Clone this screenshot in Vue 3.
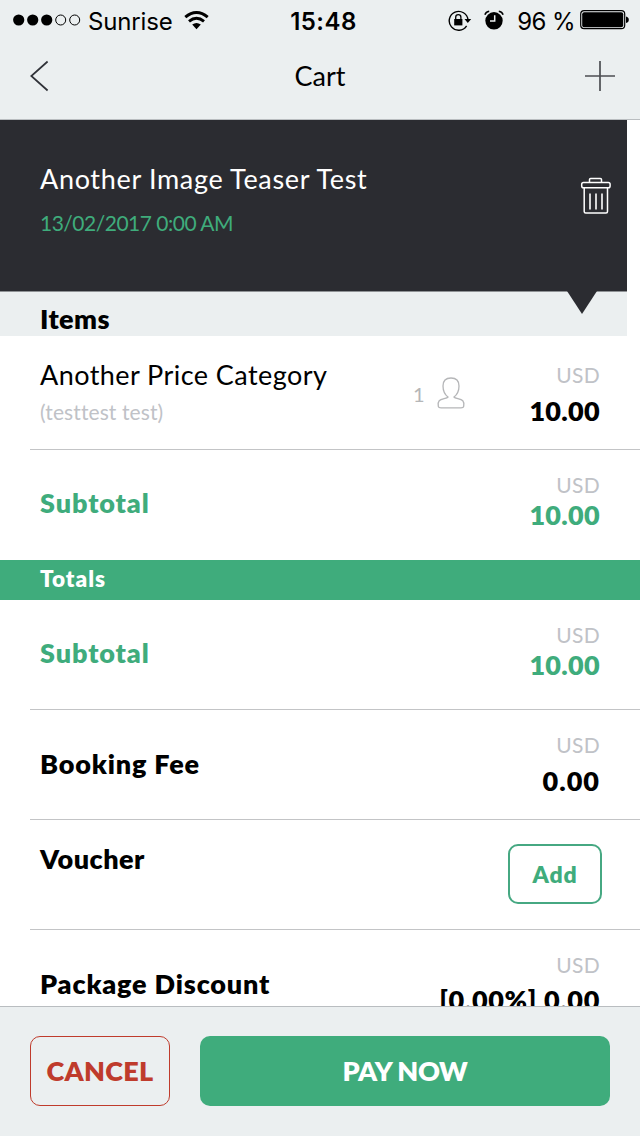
<template>
  <div class="screen">
    <header class="top">
      <div class="status-bar">
        <div class="status-left">
          <svg class="signal" width="68" height="12" viewBox="0 0 68 12">
            <circle v-for="n in 5" :key="n" :cx="n * 14 - 8.3" cy="6" :r="n < 4 ? 5.6 : 5" :class="n < 4 ? 'dot-full' : 'dot-empty'" />
          </svg>
          <span class="carrier">Sunrise</span>
          <svg class="wifi" width="25" height="19" viewBox="0 0 25 19">
            <path d="M1.3 6.2Q12.5-3.1 23.7 6.2M5 10.3Q12.5 4.3 20 10.3" fill="none" stroke="#000" stroke-width="3" />
            <path d="M8.2 13.6Q12.5 10.2 16.8 13.6L12.5 18.2Z" />
          </svg>
        </div>
        <span class="clock">15:48</span>
        <div class="status-right">
          <svg class="lock" width="24" height="21" viewBox="0 0 24 21">
            <path d="M18.6 15.8A9.4 9.4 0 1 1 20 10" fill="none" stroke="#000" stroke-width="1.4" />
            <path d="M16.5 9H23.2L19.8 13Z" />
            <path d="M6.2 9H14.4V15.4H6.2Z" />
            <path d="M7.7 9V7.3A2.6 2.6 0 0 1 12.9 7.3V9" fill="none" stroke="#000" stroke-width="1.3" />
          </svg>
          <svg class="alarm" width="20" height="20" viewBox="0 0 20 20">
            <circle cx="10" cy="10.8" r="8.7" />
            <path d="M.9 4.7Q1.8 1.8 5.2 1.2M14.8 1.2Q18.2 1.8 19.1 4.7" fill="none" stroke="#000" stroke-width="1.5" />
            <path d="M10.7 5.2V10.9H6" fill="none" stroke="#ebeff0" stroke-width="1.5" />
          </svg>
          <span class="percent">96 %</span>
          <svg class="battery" width="50" height="20" viewBox="0 0 50 20">
            <rect x=".7" y=".7" width="44" height="18" rx="3.4" fill="none" stroke="#000" stroke-width="1.2" />
            <rect x="2.2" y="2.2" width="41" height="15" rx="2" />
            <path d="M46 6.4Q48.8 7 48.8 9.7T46 13Z" />
          </svg>
        </div>
      </div>
      <nav class="nav">
        <svg class="back" width="19" height="32" viewBox="0 0 19 32">
          <path d="M17.6 1.5L1.3 16L17.6 30.5" fill="none" stroke="#303238" stroke-width="1.7" />
        </svg>
        <h1 class="nav-title">Cart</h1>
        <svg class="plus" width="30" height="30" viewBox="0 0 30 30">
          <path d="M15 0V30M0 15H30" fill="none" stroke="#4c4e52" stroke-width="1.7" />
        </svg>
      </nav>
    </header>

    <main class="content">
      <section class="event">
        <div>
          <h2 class="event-title">Another Image Teaser Test</h2>
          <p class="event-date">13/02/2017 0:00 AM</p>
        </div>
        <svg class="trash" width="32" height="38" viewBox="0 0 32 38" fill="none" stroke="#fff" stroke-width="1.5">
          <path d="M9.5 5V2.6Q9.5 1.4 10.7 1.4H20.3Q21.5 1.4 21.5 2.6V5" />
          <rect x="1.7" y="5.4" width="28.4" height="5.4" rx="1.8" />
          <path d="M4.2 11V34.5Q4.2 36 5.7 36H26Q27.5 36 27.5 34.5V11" />
          <path d="M10 16.5V32.5M16 16.5V32.5M22 16.5V32.5" stroke-width="1.6" />
        </svg>
      </section>

      <div class="items-head">
        <svg class="pointer" width="32" height="23" viewBox="0 0 32 23">
          <path d="M1 0H31L16 23Z" fill="#2b2c31" />
        </svg>
        <h3 class="items-title">Items</h3>
      </div>

      <section class="row item-row">
        <div class="item-info">
          <p class="item-name">Another Price Category</p>
          <p class="item-note">(testtest test)</p>
        </div>
        <div class="guests">
          <span class="guest-count">1</span>
          <svg width="28" height="32" viewBox="0 0 28 32">
            <path d="M14 1C9 1 6 4 6 9C6 13.8 7.7 17.5 11 20.1C10 21.7 4.2 21.7 2.2 23.7C1 25 1 27.3 1.3 29.3C1.5 30.5 2.6 30.8 4 30.8H24C25.4 30.8 26.5 30.5 26.7 29.3C27 27.3 27 25 25.8 23.7C23.8 21.7 18 21.7 17 20.1C20.3 17.5 22 13.8 22 9C22 4 19 1 14 1Z" fill="none" stroke="#b5b6b8" stroke-width="1.3" />
          </svg>
        </div>
        <div class="price">
          <span class="currency">USD</span>
          <span class="amount">10.00</span>
        </div>
      </section>

      <section class="row subtotal last">
        <p class="label">Subtotal</p>
        <div class="price">
          <span class="currency">USD</span>
          <span class="amount">10.00</span>
        </div>
      </section>

      <h3 class="totals-head">Totals</h3>

      <section v-for="total in totals" :key="total.label" class="row" :class="total.type">
        <p class="label">{{ total.label }}</p>
        <button v-if="total.action" class="add-btn">{{ total.action }}</button>
        <div v-else class="price">
          <span class="currency">USD</span>
          <span class="amount">{{ total.amount }}</span>
        </div>
      </section>
    </main>

    <footer class="footer">
      <button class="cancel-btn">CANCEL</button>
      <button class="pay-btn">PAY NOW</button>
    </footer>
  </div>
</template>

<script setup>
const totals = [
  { label: 'Subtotal', amount: '10.00', type: 'subtotal' },
  { label: 'Booking Fee', amount: '0.00', type: 'fee' },
  { label: 'Voucher', action: 'Add', type: 'voucher' },
  { label: 'Package Discount', amount: '[0.00%] 0.00', type: 'discount' },
]
</script>

<style>
body {
  margin: 0;
  background: #fff;
}
</style>

<style scoped>
* {
  box-sizing: border-box;
}

h1,
h2,
h3,
p {
  margin: 0;
}

button {
  padding: 0;
  font-family: inherit;
}

svg {
  display: block;
  flex-shrink: 0;
}

.screen {
  display: flex;
  flex-direction: column;
  width: 640px;
  height: 1136px;
  overflow: hidden;
  background: #fff;
  color: #000;
  font-family: Lato, sans-serif;
  font-size: 27px;
  line-height: 32px;
}

/* Header */
.top {
  height: 120px;
  flex-shrink: 0;
  background: #ebeff0;
  border-bottom: 1px solid #b9bdc0;
}

.status-bar {
  display: grid;
  grid-template-columns: 1fr auto 1fr;
  align-items: center;
  height: 40px;
  padding: 0 10px 0 13px;
  font-family: Inter, sans-serif;
  font-size: 24px;
}

.status-left,
.status-right {
  display: flex;
  align-items: center;
}

.status-right {
  justify-content: flex-end;
}

.dot-empty {
  fill: none;
  stroke: #000;
  stroke-width: 1;
}

.carrier {
  margin: 3px 11px 0 7px;
  letter-spacing: -0.15px;
}

.wifi {
  margin-top: 1px;
}

.clock {
  margin: 3px 0 0 4px;
  font-weight: 600;
  letter-spacing: 0.5px;
}

.alarm {
  margin: 0 13px 0 12px;
}

.percent {
  margin: 3px 5px 0 0;
  letter-spacing: -0.6px;
}

.nav {
  display: flex;
  justify-content: space-between;
  align-items: center;
  height: 72px;
  padding: 0 25px 0 30px;
}

.nav-title {
  margin: 0 0 0 6px;
  font-size: 27px;
  font-weight: 400;
}

/* Event */
.content {
  flex: 1;
  min-height: 0;
  overflow: hidden;
}

.event {
  display: flex;
  justify-content: space-between;
  width: 627px;
  height: 172px;
  padding: 43px 15px 0 40px;
  background: #2b2c31;
  border-bottom: 1px solid #8f9295;
  color: #fff;
}

.event-title {
  font-size: 27px;
  font-weight: 400;
  letter-spacing: 0.67px;
}

.event-date {
  margin-top: 16px;
  color: #3fac7c;
  font-size: 21px;
  line-height: 24px;
  letter-spacing: -0.5px;
}

.trash {
  margin-top: 14px;
}

.items-head {
  position: relative;
  width: 627px;
  height: 44px;
  padding: 11px 40px 0;
  background: #ebeff0;
}

.pointer {
  position: absolute;
  top: -1px;
  right: 29px;
}

.items-title {
  font-size: 27px;
  font-weight: 800;
  letter-spacing: 0.4px;
}

/* Rows */
.row {
  display: flex;
  justify-content: space-between;
  align-items: flex-start;
  height: 110px;
  margin-left: 30px;
  padding: 23px 40px 0 10px;
  border-bottom: 1px solid #c3c4c6;
}

.row.last {
  border-bottom: none;
}

.label {
  margin-top: 15px;
  font-weight: 800;
  letter-spacing: 0.83px;
}

.price {
  display: flex;
  flex-direction: column;
  align-items: flex-end;
  gap: 8px;
}

.currency {
  color: #c0c2c7;
  font-size: 21px;
  line-height: 24px;
  letter-spacing: 0.3px;
}

.amount {
  font-weight: 800;
  letter-spacing: 0.3px;
}

.item-row {
  height: 114px;
  padding-top: 27px;
}

.item-info {
  width: 374px;
  margin-top: -4px;
}

.item-name {
  letter-spacing: 0.44px;
}

.item-note {
  margin-top: 9px;
  color: #c0c2c7;
  font-size: 21px;
  line-height: 24px;
  letter-spacing: 0.1px;
}

.guests {
  display: flex;
  align-items: center;
  margin-top: 13px;
  margin-right: auto;
  color: #b5b6b8;
  font-size: 20px;
}

.guest-count {
  width: 24px;
  margin-left: -1px;
  padding-top: 2px;
}

.subtotal {
  color: #3fac7c;
}

.subtotal .label {
  margin-top: 14px;
  letter-spacing: 0.9px;
}

.subtotal .price {
  gap: 2px;
}

.fee .amount {
  letter-spacing: 1px;
}

.discount .price {
  gap: 7px;
}

.discount .amount {
  letter-spacing: 0.65px;
}

.totals-head {
  height: 40px;
  padding: 5px 40px 0;
  background: #3fac7c;
  color: #fff;
  font-size: 22.5px;
  font-weight: 800;
  line-height: 28px;
  letter-spacing: 1px;
}

.voucher .label {
  margin-top: 0;
  letter-spacing: 0.5px;
}

.add-btn {
  width: 94px;
  height: 60px;
  margin: 1px -2px 0 0;
  background: #fff;
  border: 2px solid #46a882;
  border-radius: 10px;
  color: #3fac7c;
  font-size: 23px;
  font-weight: 800;
  letter-spacing: 0.8px;
}

/* Footer */
.footer {
  display: flex;
  gap: 30px;
  height: 130px;
  flex-shrink: 0;
  padding: 29px 30px 0;
  background: #ebeff0;
  border-top: 1px solid #b9bdc0;
}

.cancel-btn,
.pay-btn {
  height: 70px;
  padding-bottom: 2px;
  border-radius: 10px;
  font-size: 27px;
  font-weight: 800;
}

.cancel-btn {
  width: 140px;
  background: none;
  border: 1px solid #bf3b2c;
  color: #bf3b2c;
  letter-spacing: 0.3px;
}

.pay-btn {
  flex: 1;
  background: #3fac7c;
  border: none;
  color: #fff;
  letter-spacing: -0.3px;
}
</style>
